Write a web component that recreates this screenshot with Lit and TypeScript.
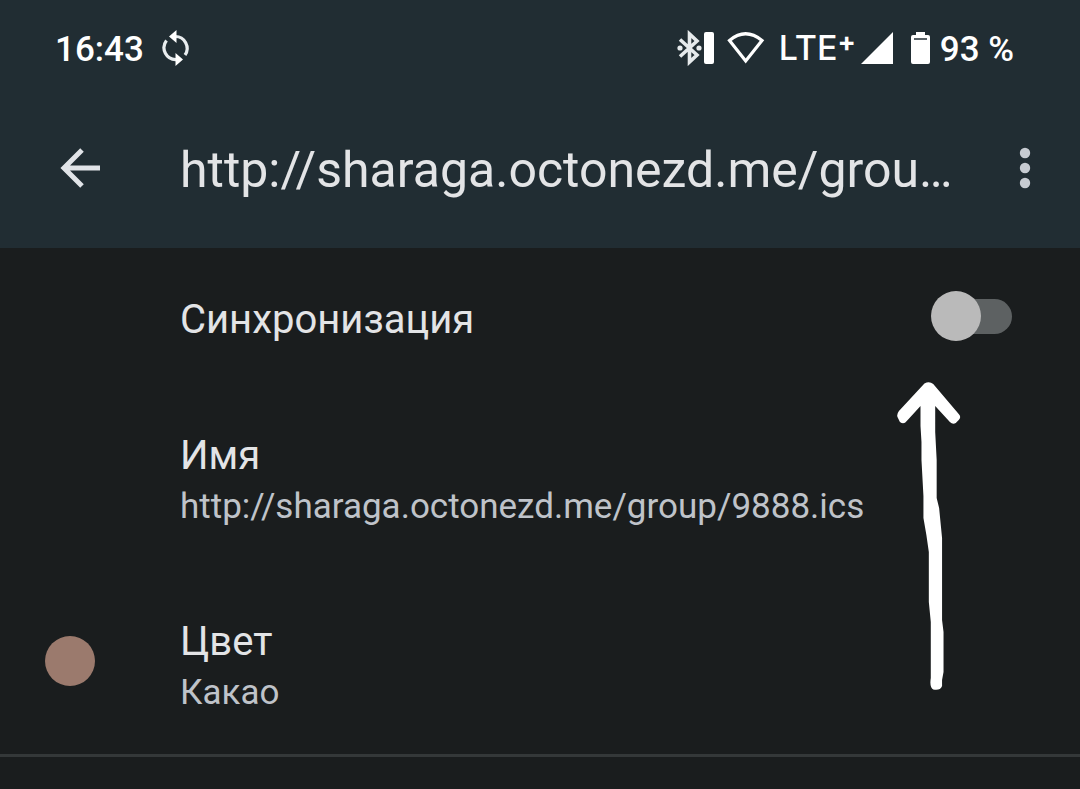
import { LitElement, html, css, svg } from "lit";
import { customElement, property, state } from "lit/decorators.js";

const CALENDAR_URL = "http://sharaga.octonezd.me/group/9888.ics";

@customElement("status-bar")
class StatusBar extends LitElement {
  static styles = css`
    :host {
      display: flex;
      align-items: center;
      height: 80px;
      padding: 8px 66px 0 55px;
      font: 500 35px/48px Roboto, sans-serif;
      color: #fff;
    }
    svg {
      display: block;
      flex: none;
    }
    .group {
      display: flex;
      align-items: center;
    }
    .start {
      gap: 17px;
      margin-right: auto;
    }
    .text {
      padding-top: 3px;
    }
    .network {
      display: flex;
      margin-left: 14px;
      font-family: Inter, Roboto, sans-serif;
      font-size: 34px;
    }
    .plus {
      font-weight: 700;
      font-size: 27px;
      line-height: 36px;
    }
    .signal {
      margin-left: 5px;
    }
    .battery {
      margin: 0 10px 0 18px;
    }
    .wifi {
      margin-left: 12px;
    }
  `;

  render() {
    return html`
      <div class="group start">
        <span class="text">16:43</span>
        <svg width="30" height="36" viewBox="0 0 30 36" fill="none" stroke="#e9edef" stroke-width="3.200">
          <path d="M14 6.500A11.800 11.800 0 0 1 24 25" />
          <path d="M5.500 10.500A11.800 11.800 0 0 0 15.500 29.500" />
          <path d="M15.500 0v13L8 6.500zM14.500 23v13l7.500-6.500z" fill="#fff" stroke="none" />
        </svg>
      </div>
      <div class="group">
        <svg width="38" height="36" viewBox="0 0 38 36">
          <path d="M3 9.500L20 25l-7.500 7V4L20 11 3 26.500" fill="none" stroke="#e6eaec" stroke-width="3.600" />
          <circle cx="3" cy="18" r="2.600" fill="#e6eaec" />
          <circle cx="22" cy="18" r="2.600" fill="#e6eaec" />
          <rect x="27" y="2" width="10" height="32" rx="2" fill="#fff" />
        </svg>
        <svg class="wifi" width="38" height="36" viewBox="0 0 38 36">
          <path d="M2.500 10.500Q18.500-3 35 10.500L18.700 31z" fill="none" stroke="#fff" stroke-width="3.200" />
        </svg>
        <span class="network">LTE<span class="plus">+</span></span>
        <svg class="signal" width="32" height="36" viewBox="0 0 32 36">
          <path d="M0 34L32 2v32z" fill="#fff" />
        </svg>
        <svg class="battery" width="19" height="36" viewBox="0 0 19 36">
          <path d="M5 2h9v3h3q2 0 2 2v25q0 2-2 2H2q-2 0-2-2V7q0-2 2-2h3z" fill="#fff" />
          <path d="M3 9h13" stroke="#212d33" stroke-width="1.500" />
        </svg>
        <span class="text">93 %</span>
      </div>
    `;
  }
}

@customElement("setting-row")
class SettingRow extends LitElement {
  @property() label = "";
  @property() value = "";

  static styles = css`
    :host {
      display: grid;
      grid-template-columns: 180px 1fr auto;
      align-items: center;
      padding-right: 68px;
    }
    .lead {
      padding: 0 0 4px 45px;
    }
    .text {
      padding-top: 8px;
    }
    .label {
      font-size: 40px;
      line-height: 52px;
      color: #e3e4e6;
    }
    .value {
      font-size: 35px;
      line-height: 50px;
      color: #bfc3c9;
    }
  `;

  render() {
    return html`
      <div class="lead"><slot name="lead"></slot></div>
      <div class="text">
        <div class="label">${this.label}</div>
        ${this.value ? html`<div class="value">${this.value}</div>` : ""}
      </div>
      <slot name="control"></slot>
    `;
  }
}

@customElement("app-root")
class AppRoot extends LitElement {
  @state() private synced = false;

  static styles = css`
    :host {
      display: block;
      position: relative;
      min-height: 100vh;
      background: #1a1d1e;
      color: #e3e4e6;
      font-family: "Google Sans", Roboto, sans-serif;
    }
    header {
      background: #212d33;
    }
    .toolbar {
      display: flex;
      align-items: center;
      height: 160px;
      padding: 0 35px 0 50px;
    }
    button {
      display: block;
      flex: none;
      padding: 0;
      border: 0;
      background: none;
    }
    button svg {
      display: block;
    }
    h1 {
      flex: 1;
      min-width: 0;
      margin: 0 40px 0 70px;
      padding-top: 4px;
      overflow: hidden;
      white-space: nowrap;
      text-overflow: ellipsis;
      font-size: 50px;
      line-height: 64px;
      font-weight: 400;
    }
    .list {
      display: flex;
      flex-direction: column;
      gap: 76px;
      padding: 38px 0 36px;
      border-bottom: 3px solid #343839;
    }
    .switch {
      appearance: none;
      display: grid;
      align-items: center;
      width: 81px;
      height: 50px;
      margin: 0;
    }
    .switch::before,
    .switch::after {
      content: "";
      grid-area: 1 / 1;
    }
    .switch::before {
      height: 35px;
      margin-left: 8px;
      border-radius: 18px;
      background: #5d6162;
    }
    .switch::after {
      width: 50px;
      height: 50px;
      border-radius: 50%;
      background: #bababa;
    }
    .switch:checked::after {
      justify-self: end;
    }
    .swatch {
      width: 50px;
      height: 50px;
      border-radius: 50%;
      background: #9b7a6d;
    }
    .pointer {
      position: absolute;
      top: 380px;
      right: 118px;
      pointer-events: none;
    }
  `;

  render() {
    return html`
      <header>
        <status-bar></status-bar>
        <div class="toolbar">
          <button aria-label="Назад">
            <svg width="60" height="60" viewBox="0 0 60 60" fill="none" stroke="#e1e4e8" stroke-width="5">
              <path d="M50 30H14M32 12L14 30l18 18" />
            </svg>
          </button>
          <h1>${CALENDAR_URL}</h1>
          <button aria-label="Ещё">
            <svg width="40" height="60" viewBox="0 0 40 60" fill="#c6cbd1">
              ${[15, 30, 45].map((y) => svg`<circle cx="20" cy=${y} r="5.200" />`)}
            </svg>
          </button>
        </div>
      </header>
      <main class="list">
        <setting-row label="Синхронизация">
          <input
            slot="control"
            class="switch"
            type="checkbox"
            role="switch"
            aria-label="Синхронизация"
            .checked=${this.synced}
            @change=${(e: Event) => (this.synced = (e.target as HTMLInputElement).checked)}
          />
        </setting-row>
        <setting-row label="Имя" value=${CALENDAR_URL}></setting-row>
        <setting-row label="Цвет" value="Какао">
          <div slot="lead" class="swatch"></div>
        </setting-row>
      </main>
      <svg class="pointer" width="68" height="312" viewBox="0 0 68 312" fill="#fff">
        <path
          d="M29 3.500Q34 1 38 4L64 34Q67 37 64 40L61 43Q58 45 55 42L40 26V52L41.500 80V118L44 128 46 148 47 158V240L48.500 252V292L47 300V306Q45 311 38 309.500Q34 307 35.500 298V242L33.500 222V172L31 155 28 138V116L26 80V62L25 46V26L11 41Q8 45 4 42L2 38Q0 35 3 31z"
          transform="translate(2 0) scale(.98 1)"
        />
      </svg>
    `;
  }
}
